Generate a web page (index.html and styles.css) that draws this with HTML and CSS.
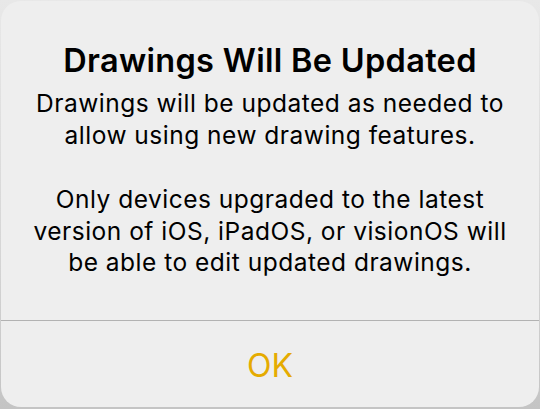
FILE: index.html
```html
<!DOCTYPE html>
<html lang="en">
<head>
    <meta charset="UTF-8">
    <meta name="viewport" content="width=device-width, initial-scale=1.0">
    <title>Drawings Will Be Updated</title>
    <link rel="stylesheet" href="styles.css">
</head>
<body>
    <div class="alert">
        <div class="alert-body">
            <h1 class="alert-title">Drawings Will Be Updated</h1>
            <p class="alert-msg">Drawings will be updated as needed to<br>allow using new drawing features.</p>
            <p class="alert-msg">Only devices upgraded to the latest<br>version of iOS, iPadOS, or visionOS will<br>be able to edit updated drawings.</p>
        </div>
        <button class="alert-btn">OK</button>
    </div>
</body>
</html>
```

FILE: styles.css
```css
*{
    box-sizing: border-box;
}

body{
    margin: 0;
    height: 409px;
    overflow: hidden;
    background: linear-gradient(#e8e8e8, #d6d6d6 60%, #c4c4c4);
    font-family: Inter, "Noto Sans", "Liberation Sans", sans-serif;
}

.alert{
    display: flex;
    flex-direction: column;
    margin: 1px 1px 0;
    height: 406px;
    background-color: #eeeeee;
    border-radius: 20px;
    overflow: hidden;
}

.alert-body{
    flex: 1;
    padding-top: 41px;
    text-align: center;
    border-bottom: 1px solid #b2b2b2;
}

.alert-title{
    margin: 0 0 8px;
    font-size: 32.5px;
    line-height: 38px;
    font-weight: 600;
    letter-spacing: 0.3px;
    color: #000;
}

.alert-msg{
    margin: 0 0 33px;
    font-size: 24.5px;
    line-height: 31.5px;
    letter-spacing: 0.5px;
    color: #000;
}

.alert-btn{
    height: 86px;
    padding: 3px 0 0;
    border: none;
    background: none;
    font-family: inherit;
    font-size: 32px;
    color: #e5ab00;
}
```
